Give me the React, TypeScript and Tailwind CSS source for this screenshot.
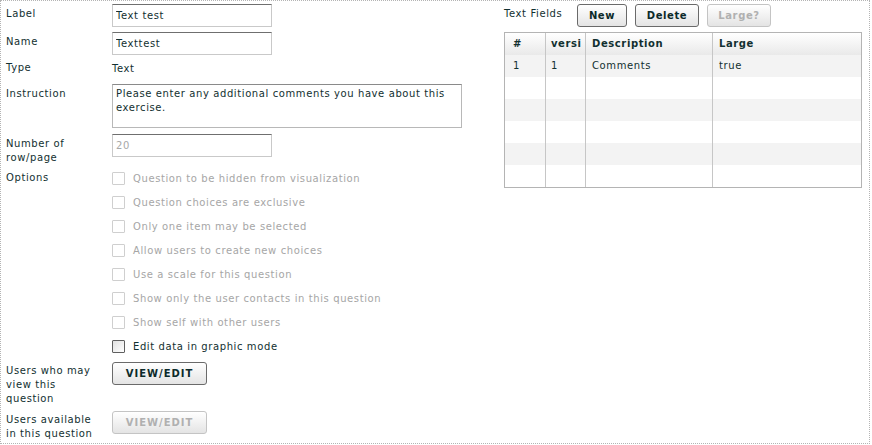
import type { ReactNode } from "react";

const font = "font-['DejaVu_Sans',Verdana,sans-serif] text-[10px] tracking-[0.6px]";
const ink = "text-[#123030]";

const inputCls =
  "h-[23px] border border-[#c9c9c9] border-t-[#6f6f6f] bg-white px-[3px] text-[10px] tracking-[0.6px] leading-[21px] outline-none";

const options: { label: string; enabled?: boolean }[] = [
  { label: "Question to be hidden from visualization" },
  { label: "Question choices are exclusive" },
  { label: "Only one item may be selected" },
  { label: "Allow users to create new choices" },
  { label: "Use a scale for this question" },
  { label: "Show only the user contacts in this question" },
  { label: "Show self with other users" },
  { label: "Edit data in graphic mode", enabled: true },
];

const Row = ({
  label,
  children,
  className = "",
  labelPad = "pt-[3px]",
}: {
  label: ReactNode;
  children: ReactNode;
  className?: string;
  labelPad?: string;
}) => (
  <div className={`flex ${className}`}>
    <div className={`w-[106px] shrink-0 leading-[14px] ${labelPad}`}>{label}</div>
    <div className="flex-1">{children}</div>
  </div>
);

const Button = ({
  children,
  disabled,
  className = "",
}: {
  children: ReactNode;
  disabled?: boolean;
  className?: string;
}) => (
  <button
    className={`h-[23px] rounded-[3px] border bg-gradient-to-b from-white to-[#e4e4e4] font-bold ${
      disabled
        ? "border-[#c4c4c4] text-[#b0b0b0]"
        : "border-[#6a6a6a] text-[#0c2a2a]"
    } ${className}`}
    disabled={disabled}
    type="button"
  >
    {children}
  </button>
);

const Checkbox = ({ enabled }: { enabled?: boolean }) => (
  <span
    className={`inline-block h-[13px] w-[13px] shrink-0 rounded-[1px] border ${
      enabled
        ? "border-[#5f5f5f] bg-gradient-to-br from-[#e0e0e0] to-white"
        : "border-[#cfcfcf] bg-white"
    }`}
  />
);

const rows = [
  { n: "1", v: "1", d: "Comments", l: "true" },
  null,
  null,
  null,
  null,
  null,
];

export default function App() {
  return (
    <div className={`h-[445px] w-[872px] bg-white ${font} ${ink}`}>
      <div className="flex h-[444px] w-[870px] border border-dotted border-[#b4b4b4]">
        {/* Left form */}
        <div className="w-[497px] shrink-0 pl-[5px] pt-[3px]">
          <Row label="Label">
            <input className={`${inputCls} w-[160px] ${ink}`} defaultValue="Text test" />
          </Row>
          <Row className="mt-[5px]" label="Name">
            <input className={`${inputCls} w-[160px] ${ink}`} defaultValue="Texttest" />
          </Row>
          <Row className="mt-[3px] h-[26px]" label="Type">
            <div className="pt-[4px] leading-[14px]">Text</div>
          </Row>
          <Row label="Instruction">
            <div className="h-[44px] w-[350px] border border-[#b8b8b8] border-t-[#8a8a8a] px-[3px] pt-[2px] leading-[14px]">
              Please enter any additional comments you have about this exercise.
            </div>
          </Row>
          <Row
            className="mt-[6px]"
            label={
              <>
                Number of
                <br />
                row/page
              </>
            }
          >
            <input
              className={`${inputCls} w-[160px] text-[#a8a8a8]`}
              defaultValue="20"
              disabled
            />
          </Row>
          <Row className="mt-[3px]" label="Options">
            <div className="pt-[4px]">
              {options.map((o) => (
                <div className="flex h-[24px] items-start gap-[8px]" key={o.label}>
                  <Checkbox enabled={o.enabled} />
                  <span
                    className={`leading-[13px] ${o.enabled ? "" : "text-[#a6a6a6]"}`}
                  >
                    {o.label}
                  </span>
                </div>
              ))}
            </div>
          </Row>
          <Row
            className="-mt-[2px]"
            labelPad="pt-[2px]"
            label={
              <>
                Users who may
                <br />
                view this
                <br />
                question
              </>
            }
          >
            <Button className="w-[95px] tracking-[1px]">VIEW/EDIT</Button>
          </Row>
          <Row
            className="mt-[4px]"
            labelPad="pt-[3px]"
            label={
              <>
                Users available
                <br />
                in this question
              </>
            }
          >
            <Button className="mt-[1px] w-[95px] tracking-[1px]" disabled>
              VIEW/EDIT
            </Button>
          </Row>
        </div>

        {/* Right: text fields */}
        <div className="flex-1 pl-[6px] pt-[3px]">
          <div className="flex items-start">
            <span className="w-[73px] pt-[3px] leading-[14px]">Text Fields</span>
            <Button className="w-[50px]">New</Button>
            <Button className="ml-[8px] w-[64px]">Delete</Button>
            <Button className="ml-[8px] w-[64px]" disabled>
              Large?
            </Button>
          </div>
          <div className="mt-[5px] w-[358px] border border-[#b4b4b4]">
            <div className="flex h-[22px] bg-gradient-to-b from-white to-[#e9e9e9] font-bold leading-[22px]">
              <div className="w-[41px] border-r border-[#c6c6c6] pl-[8px]">#</div>
              <div className="w-[40px] overflow-hidden whitespace-nowrap border-r border-[#c6c6c6] pl-[5px]">
                versi
              </div>
              <div className="w-[127px] border-r border-[#c6c6c6] pl-[6px]">Description</div>
              <div className="flex-1 pl-[6px]">Large</div>
            </div>
            {rows.map((r, i) => (
              <div
                className={`flex h-[22px] leading-[22px] ${i % 2 === 0 ? "bg-[#f3f3f3]" : "bg-white"}`}
                key={i}
              >
                <div className="w-[41px] border-r border-[#c6c6c6] pl-[8px]">{r?.n}</div>
                <div className="w-[40px] border-r border-[#c6c6c6] pl-[5px]">{r?.v}</div>
                <div className="w-[127px] border-r border-[#c6c6c6] pl-[6px]">{r?.d}</div>
                <div className="flex-1 pl-[6px]">{r?.l}</div>
              </div>
            ))}
          </div>
        </div>
      </div>
    </div>
  );
}
